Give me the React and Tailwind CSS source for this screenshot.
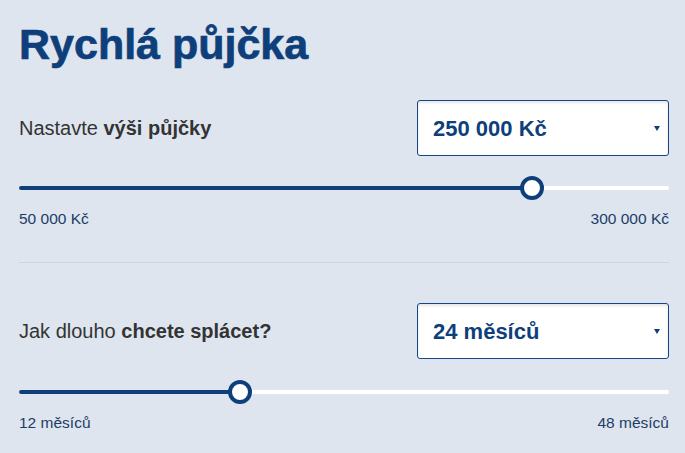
const Select = ({ value }) => (
  <div className="w-[252px] h-[56px] bg-white border border-[#16468a] rounded-[3px] shadow-[inset_0_2px_3px_rgba(0,0,0,0.10)] flex items-center justify-between pl-[15px] pr-[8px]">
    <span className="text-[22px] font-bold text-[#0e3f7b]">{value}</span>
    <svg width="6" height="6" viewBox="0 0 6 6" className="mb-[1px]">
      <path d="M0 1 L6 1 L3 6 Z" fill="#0e3f7b" />
    </svg>
  </div>
);

const Slider = ({ pct, min, max, first }) => (
  <div>
    <div className={`relative h-[24px] flex items-center ${first ? 'mt-[20px]' : 'mt-[21px]'}`}>
      <div className="w-full h-[4px] bg-white rounded-full" />
      <div
        className="absolute left-0 h-[4px] bg-[#0e3f7b] rounded-full"
        style={{ width: `calc(12px + ${pct} * (100% - 24px))` }}
      />
      <div
        className="absolute w-[24px] h-[24px] rounded-full bg-white border-[4px] border-[#0e3f7b]"
        style={{ left: `calc(${pct} * (100% - 24px))` }}
      />
    </div>
    <div className="mt-[9px] flex justify-between text-[15.5px] leading-[20px] text-[#1d3d66]">
      <span>{min}</span>
      <span>{max}</span>
    </div>
  </div>
);

export default function App() {
  return (
    <div className="min-h-[453px] bg-[#dee5ef] pl-[19px] pr-[16px] pt-[23px] pb-[20px] font-['Liberation_Sans',Arial,sans-serif]">
      <h1 className="text-[43px] leading-none font-bold text-[#0e3f7b] [-webkit-text-stroke:0.7px_#0e3f7b]">Rychlá půjčka</h1>

      <div className="mt-[34px] flex items-center justify-between">
        <div className="text-[20px] text-[#333]">
          Nastavte <span className="font-bold">výši půjčky</span>
        </div>
        <Select value="250 000 Kč" />
      </div>
      <Slider pct={0.8} min="50 000 Kč" max="300 000 Kč" first />

      <div className="mt-[33px] h-px bg-[#ccd4df]" />

      <div className="mt-[40px] flex items-center justify-between">
        <div className="text-[20px] text-[#333]">
          Jak dlouho <span className="font-bold">chcete splácet?</span>
        </div>
        <Select value="24 měsíců" />
      </div>
      <Slider pct={1 / 3} min="12 měsíců" max="48 měsíců" />
    </div>
  );
}
